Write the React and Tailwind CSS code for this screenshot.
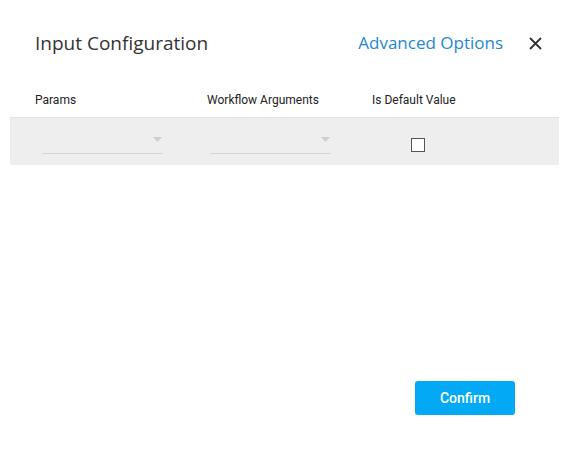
import React, { useState } from 'react';

const Select = () => (
  <div className="relative w-[121px] h-[22px] border-b border-[#d6d6d6]">
    <svg className="absolute right-[1px] top-[5px]" width="9" height="5" viewBox="0 0 9 5">
      <path d="M0 0 L9 0 L4.5 5 Z" fill="#cfcfcf" />
    </svg>
  </div>
);

const App = () => {
  const [checked, setChecked] = useState(false);

  return (
    <div className="w-[569px] h-[449px] bg-white relative" style={{ fontFamily: 'Roboto, "Liberation Sans", sans-serif' }}>
      <div className="flex items-center h-[44px] pt-[21px] pl-[35px] pr-[27px] box-content">
        <h2 className="text-[19px] text-[#333] flex-1" style={{ fontFamily: '"Open Sans", "Noto Sans", sans-serif' }}>
          Input Configuration
        </h2>
        <span className="text-[17px] text-[#1e88d2] mr-[26px]" style={{ fontFamily: '"Open Sans", "Noto Sans", sans-serif' }}>
          Advanced Options
        </span>
        <svg width="13" height="13" viewBox="0 0 13 13">
          <path d="M1 1 L12 12 M12 1 L1 12" stroke="#333" strokeWidth="1.8" />
        </svg>
      </div>

      <div className="flex text-[12px] text-[#222] mt-[26px] pl-[35px] h-[26px]">
        <div className="w-[172px]">Params</div>
        <div className="w-[165px]">Workflow Arguments</div>
        <div>Is Default Value</div>
      </div>

      <div className="mx-[10px] h-[48px] bg-[#eeeeee] border-t border-[#e4e4e4] flex items-center">
        <div className="ml-[32px] mt-[3px]">
          <Select />
        </div>
        <div className="ml-[47px] mt-[3px]">
          <Select />
        </div>
        <button
          onClick={() => setChecked(!checked)}
          className="ml-[80px] mt-[6px] w-[14px] h-[14px] border-[1.5px] border-[#555] bg-white"
        />
      </div>

      <div className="flex justify-end pr-[54px] mt-[216px]">
        <button className="w-[100px] h-[34px] bg-[#03a9f4] text-white text-[14px] font-medium rounded-[3px]">
          Confirm
        </button>
      </div>
    </div>
  );
};

export default App;
